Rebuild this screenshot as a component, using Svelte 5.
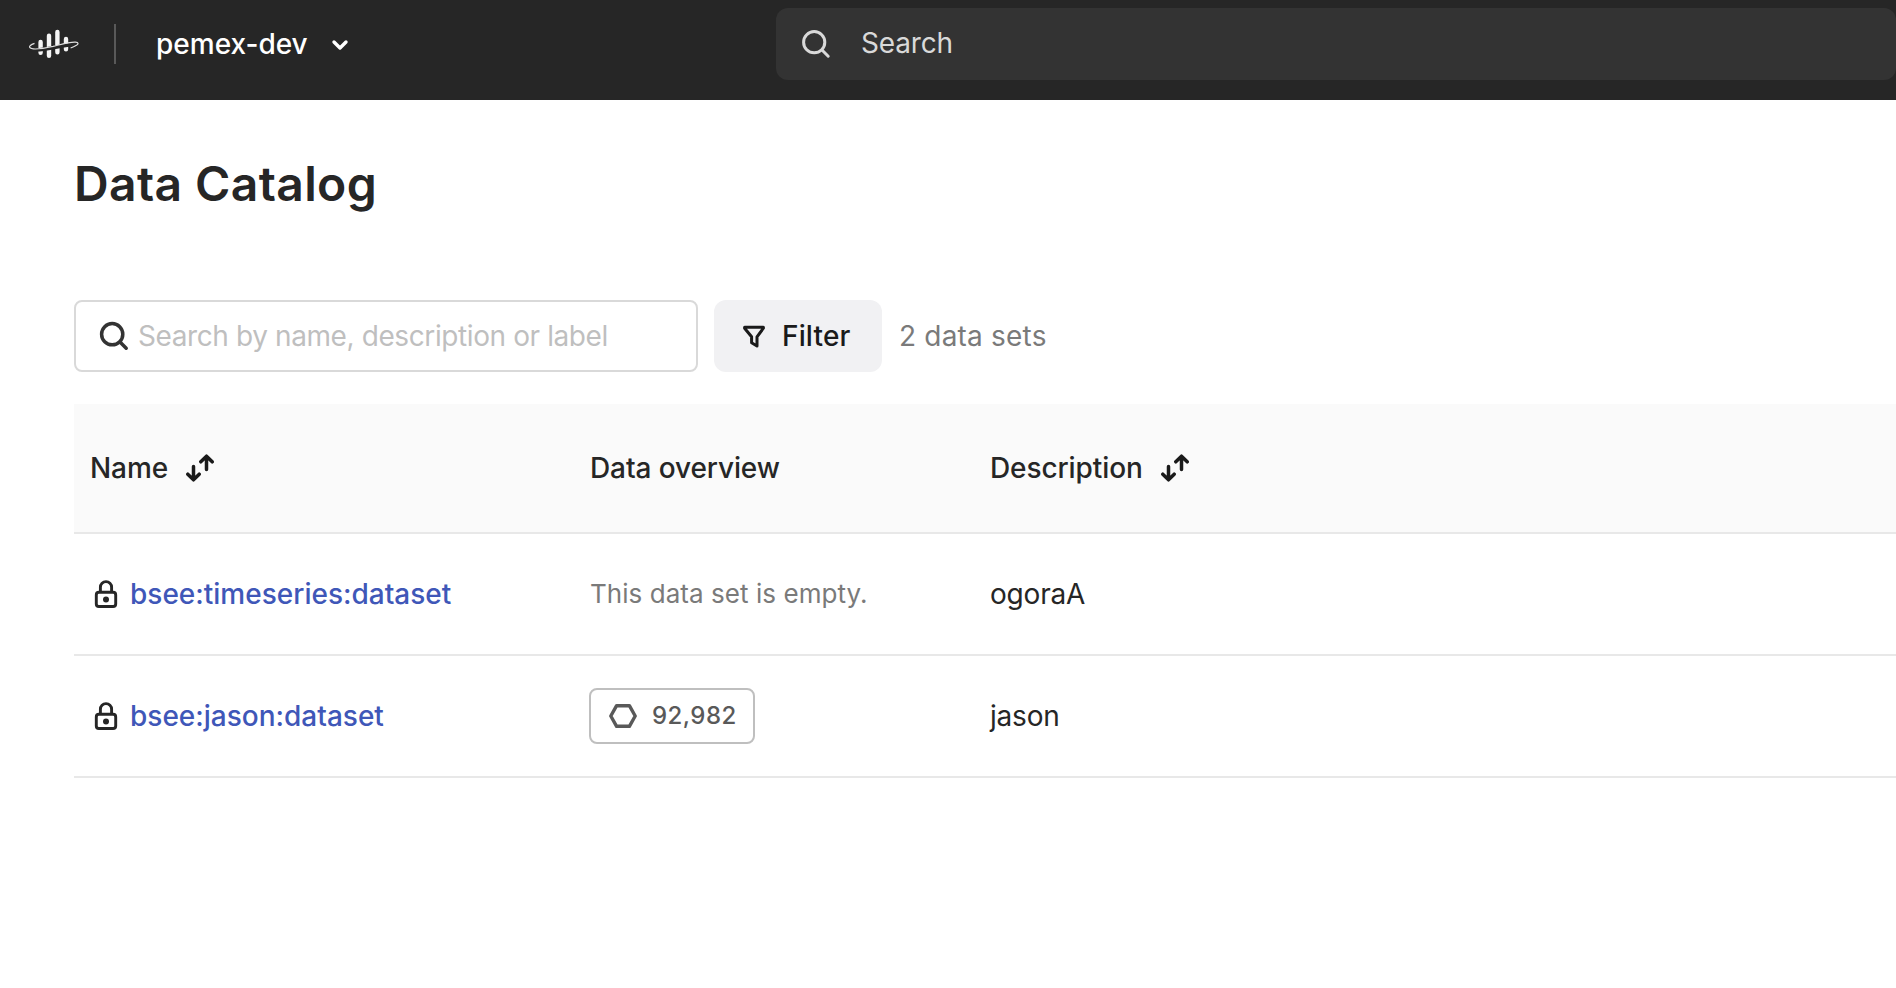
<script>
  const rows = [
    { name: 'bsee:timeseries:dataset', count: null, description: 'ogoraA' },
    { name: 'bsee:jason:dataset', count: '92,982', description: 'jason' }
  ];
</script>

{#snippet searchIcon(width)}
  <svg class="search-icon" width="32" height="32" viewBox="0 0 32 32" fill="none" stroke="currentColor" stroke-width={width} stroke-linecap="round">
    <circle cx="14.2" cy="14.2" r="10.6" />
    <path d="M22 22L28.2 28.2" />
  </svg>
{/snippet}

{#snippet sortIcon()}
  <svg class="sort" width="28" height="28" viewBox="0 0 28 28" fill="none" stroke="currentColor" stroke-width="3.5" stroke-linecap="round" stroke-linejoin="round">
    <path d="M7.5 12.5V25.5M1.8 20.2L7.5 25.8L13.2 20.2" />
    <path d="M20.5 15.5V2.5M14.8 7.8L20.5 2.2L26.2 7.8" />
  </svg>
{/snippet}

<div class="page">
  <header>
    <svg class="logo" width="52" height="30" viewBox="0 0 52 30" fill="none">
      <g stroke="#f5f5f5" stroke-width="4.4" stroke-linecap="round">
        <path d="M12.6 12.9V23.8M21 6.7V26.8M29.4 2.9V23.3M38 10V20.2" />
      </g>
      <path d="M2 20.3C14 23.5 30 15.8 49 15.2" stroke="#262626" stroke-width="3.4" />
      <path d="M6.5 14.4C2.6 15.8 .9 17.3 1.7 18.4C3.1 20.5 12.5 20.1 25 17.4C34 15.2 42 12.8 47.5 13.2C50.6 13.5 51 14.9 48 16.6C46.4 17.6 45 18.2 42.6 19" stroke="#e0e0e0" stroke-width="1.2" />
    </svg>
    <span class="divider"></span>
    <span class="project">pemex-dev</span>
    <svg class="chevron" width="18" height="12" viewBox="0 0 18 12" fill="none" stroke="#fff" stroke-width="3.4" stroke-linecap="round" stroke-linejoin="round">
      <path d="M3 3L9 9L15 3" />
    </svg>
    <div class="global-search">
      {@render searchIcon(3)}
      <span>Search</span>
    </div>
  </header>

  <main>
    <h1><span>Data Catalog</span></h1>
    <div class="toolbar">
      <div class="field">
        {@render searchIcon(3.5)}
        <span>Search by name, description or label</span>
      </div>
      <button>
        <svg width="24" height="24" viewBox="0 0 24 24" fill="none" stroke="currentColor" stroke-width="3" stroke-linejoin="round">
          <path d="M2.6 3.2H21.4V4.2L15 12.8V22L9.6 18.8V12.8L2.6 4.2Z" />
        </svg>
        <span>Filter</span>
      </button>
      <span class="total">2 data sets</span>
    </div>

    <div class="table">
      <div class="row head">
        <div class="cell"><span>Name</span>{@render sortIcon()}</div>
        <div class="cell"><span>Data overview</span></div>
        <div class="cell"><span>Description</span>{@render sortIcon()}</div>
      </div>
      {#each rows as row}
        <div class="row">
          <div class="cell">
            <svg class="lock" width="24" height="28" viewBox="0 0 24 28" fill="none" stroke="currentColor" stroke-width="2.9">
              <rect x="2.3" y="12.3" width="19.4" height="14.2" rx="2.6" />
              <path d="M6.4 12V7.2A5.6 5.6 0 0 1 17.6 7.2V12" />
              <circle cx="12" cy="19.4" r="3" fill="currentColor" stroke="none" />
            </svg>
            <span class="link">{row.name}</span>
          </div>
          <div class="cell">
            {#if row.count}
              <span class="badge">
                <svg width="28" height="24" viewBox="0 0 28 24" fill="none" stroke="currentColor" stroke-width="3.4" stroke-linejoin="round">
                  <path d="M7.6 1.7H20.4L26.2 12L20.4 22.3H7.6L1.8 12Z" />
                </svg>
                <span>{row.count}</span>
              </span>
            {:else}
              <span class="empty">This data set is empty.</span>
            {/if}
          </div>
          <div class="cell"><span class="desc">{row.description}</span></div>
        </div>
      {/each}
    </div>
  </main>
</div>

<style>
  :global(body) {
    margin: 0;
    background: #fff;
  }
  .page {
    height: 988px;
    overflow: hidden;
    font-family: Inter, "Liberation Sans", sans-serif;
    font-size: 28px;
    line-height: 40px;
    color: #262626;
    white-space: nowrap;
  }
  svg {
    display: block;
    flex: none;
  }
  header {
    height: 88px;
    padding-bottom: 12px;
    display: flex;
    align-items: center;
    background: #262626;
    color: #fff;
  }
  .logo {
    margin-left: 28px;
  }
  .divider {
    width: 2px;
    height: 40px;
    margin-left: 34px;
    background: #595959;
  }
  .project {
    width: 150px;
    margin-left: 40px;
    font-weight: 500;
  }
  .chevron {
    margin-left: 25px;
    margin-top: 2px;
  }
  .global-search {
    box-sizing: border-box;
    width: 1120px;
    height: 72px;
    margin-left: auto;
    padding-left: 24px;
    border-radius: 12px;
    display: flex;
    align-items: center;
    background: #333;
    color: #d9d9d9;
  }
  .global-search span {
    margin-left: 29px;
    padding-bottom: 2px;
    letter-spacing: -0.15px;
  }
  main {
    padding-left: 74px;
  }
  h1 {
    margin: 0;
    padding-top: 52px;
    font-size: 48px;
    line-height: 64px;
    font-weight: 600;
    letter-spacing: 0.38px;
  }
  .toolbar {
    display: flex;
    align-items: center;
    margin-top: 84px;
    height: 72px;
  }
  .field {
    box-sizing: border-box;
    width: 624px;
    height: 72px;
    border: 2px solid #d9d9d9;
    border-radius: 8px;
    padding-left: 22px;
    display: flex;
    align-items: center;
    color: #333;
  }
  .field span {
    margin-left: 8px;
    letter-spacing: -0.4px;
    color: #bfbfbf;
  }
  button {
    box-sizing: border-box;
    width: 168px;
    height: 72px;
    margin: 0 0 0 16px;
    padding: 0 0 0 28px;
    border: 0;
    border-radius: 12px;
    display: flex;
    align-items: center;
    background: #f1f1f3;
    color: #1a1a1a;
    font: inherit;
    font-weight: 500;
    letter-spacing: 0.15px;
  }
  button span {
    margin-left: 16px;
  }
  .total {
    margin-left: 17px;
    letter-spacing: 0.2px;
    color: #7a7a7a;
  }
  .table {
    margin-top: 32px;
  }
  .row {
    box-sizing: border-box;
    height: 122px;
    display: grid;
    grid-template-columns: 500px 400px 1fr;
    border-bottom: 2px solid #e8e8e8;
  }
  .head {
    height: 130px;
    background: #fafafa;
    font-weight: 500;
    letter-spacing: -0.1px;
  }
  .cell {
    display: flex;
    align-items: center;
    padding-left: 16px;
  }
  .sort {
    margin-left: 18px;
    color: #1a1a1a;
  }
  .lock {
    margin-left: 4px;
  }
  .link {
    margin-left: 12px;
    font-weight: 500;
    color: #3f57b8;
  }
  .empty {
    font-size: 26px;
    letter-spacing: 0.05px;
    color: #7a7a7a;
  }
  .desc {
    letter-spacing: -0.2px;
  }
  .badge {
    box-sizing: border-box;
    width: 166px;
    height: 56px;
    margin-left: -1px;
    padding-left: 18px;
    border: 2px solid #bfbfbf;
    border-radius: 8px;
    display: flex;
    align-items: center;
    font-size: 24px;
    font-weight: 500;
    letter-spacing: 0.45px;
    color: #595959;
  }
  .badge span {
    margin-left: 15px;
  }
</style>
